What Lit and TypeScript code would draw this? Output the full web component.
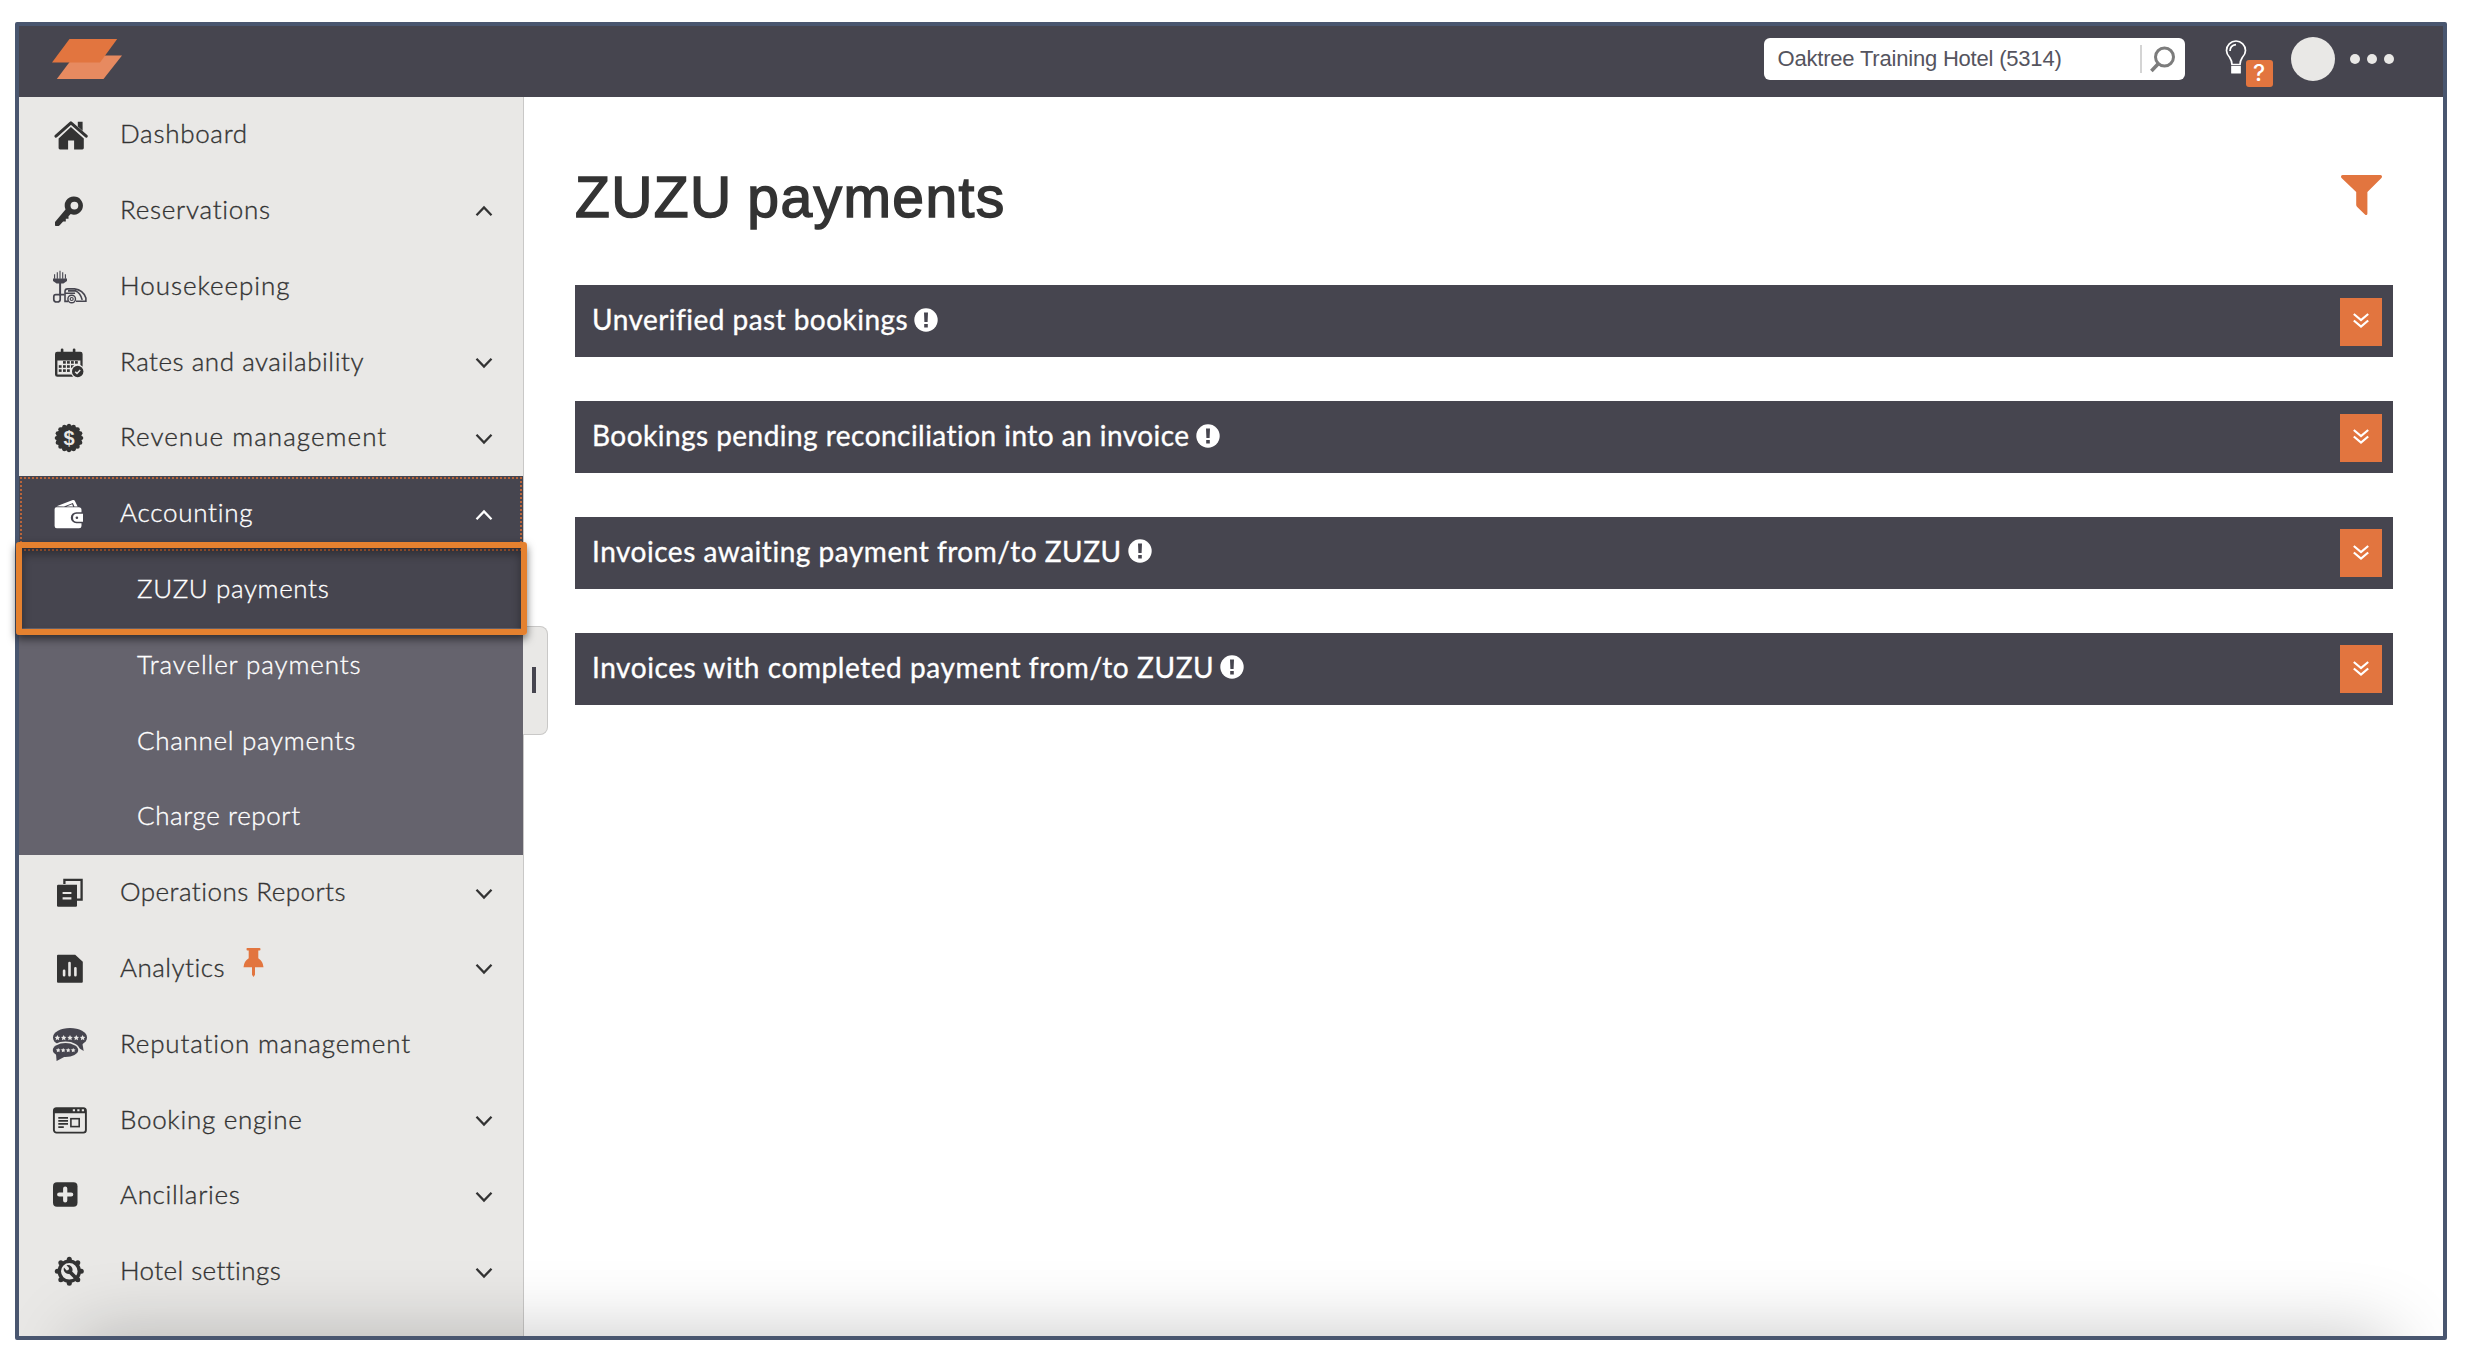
import { LitElement, css, html, svg, nothing } from "lit";
import { customElement, property } from "lit/decorators.js";
import { classMap } from "lit/directives/class-map.js";
import { styleMap } from "lit/directives/style-map.js";

type NavItem = {
  label: string;
  icon?: string;
  tracking: number;
  arrow?: "up" | "down";
  pinned?: boolean;
  active?: boolean;
  children?: NavItem[];
};

const NAV: NavItem[] = [
  { label: "Dashboard", icon: "home", tracking: 0.7 },
  { label: "Reservations", icon: "key", tracking: 0.73, arrow: "up" },
  { label: "Housekeeping", icon: "vacuum", tracking: 0.97 },
  { label: "Rates and availability", icon: "calendar", tracking: 0.53, arrow: "down" },
  { label: "Revenue management", icon: "dollar", tracking: 1.05, arrow: "down" },
  {
    label: "Accounting",
    icon: "wallet",
    tracking: 0.74,
    arrow: "up",
    active: true,
    children: [
      { label: "ZUZU payments", tracking: 0.62, active: true },
      { label: "Traveller payments", tracking: 0.88 },
      { label: "Channel payments", tracking: 0.7 },
      { label: "Charge report", tracking: 0.6 },
    ],
  },
  { label: "Operations Reports", icon: "copy", tracking: 0.46, arrow: "down" },
  { label: "Analytics", icon: "chart", tracking: 0.5, arrow: "down", pinned: true },
  { label: "Reputation management", icon: "reviews", tracking: 0.82 },
  { label: "Booking engine", icon: "browser", tracking: 0.7, arrow: "down" },
  { label: "Ancillaries", icon: "plus", tracking: 0.68, arrow: "down" },
  { label: "Hotel settings", icon: "gear", tracking: 0.4, arrow: "down" },
];

const PANELS = [
  { title: "Unverified past bookings", tracking: 0.46 },
  { title: "Bookings pending reconciliation into an invoice", tracking: 0.46 },
  { title: "Invoices awaiting payment from/to ZUZU", tracking: 0.52 },
  { title: "Invoices with completed payment from/to ZUZU", tracking: 0.57 },
];

const BG = "#e9e8e6";

const star = (x: number, y: number, r: number) => {
  const points = Array.from({ length: 10 }, (_, i) => {
    const radius = i % 2 ? r * 0.5 : r;
    const angle = (i * Math.PI) / 5 - Math.PI / 2;
    return `${x + radius * Math.cos(angle)},${y + radius * Math.sin(angle)}`;
  });
  return svg`<polygon points=${points.join(" ")} fill=${BG} />`;
};

const ring = (count: number, distance: number, r: number, cx: number, cy: number) =>
  Array.from({ length: count }, (_, i) => {
    const angle = (i * 2 * Math.PI) / count;
    return svg`<circle cx=${cx + distance * Math.cos(angle)} cy=${cy + distance * Math.sin(angle)} r=${r} />`;
  });

const ICONS: Record<string, unknown> = {
  home: svg`
    <path d="M25.8 4.8h4.8v9l-4.8-4.4z" />
    <path d="M4 19.2 18.9 5.8 34.2 19.2" fill="none" stroke="currentColor" stroke-width="3" stroke-linecap="round" stroke-linejoin="round" />
    <path d="M18.9 10 31.8 21.4V31q0 1.4-1.4 1.4h-8.3v-8.8h-6v8.8H8q-1.4 0-1.4-1.4v-9.6z" />`,
  key: svg`
    <path fill-rule="evenodd" d="M22 3.6a9 9 0 1 1-3.3 17.4l-2.2 2.2v2.6h-2.7v2.6h-2.7l-3.4 3.8q-1 .9-2.4.9H4.2Q3 33.1 3 31.900v-3l10.500-12.500A9 9 0 0 1 22 3.600zM22.400 8.700a3.900 3.900 0 1 0 0 7.800 3.900 3.900 0 0 0 0-7.800z" />`,
  vacuum: svg`
    <g fill="#46454f">
      <path d="M1 9.600h14v2.400l-3.600 2.600h-6.800L1 12z" />
      <rect x="7.100" y="14" width="2" height="12.500" />
    </g>
    <g fill="none" stroke="#46454f">
      <path d="M2.600 9.800V5.200M5.300 9.800V3.200M8 9.800V1.800M10.700 9.800V3.200M13.400 9.800V5.200" stroke-width="1.100" />
      <path d="M12.500 25.600H3.800q-2 0-2 2.200v2.600q0 2.600 3.200 2.600t3.200-2.600V25" stroke-width="1.700" />
      <path d="M16 32.400h-3V22.500q0-2.600 2.600-2.600h7q8.400 1 11.300 9v3.400H24M16 21.900h7.600q4.600 1.400 6.600 9M13.500 24.200h9.600" stroke-width="1.600" />
      <circle cx="19.700" cy="30" r="3.800" stroke-width="1.400" />
      <circle cx="19.700" cy="30" r="1.500" stroke-width="1.200" />
    </g>`,
  calendar: svg`
    <path d="M3 9q0-2.200 2.200-2.200h3.600V4.400q0-1 1.300-1t1.300 1v2.400h9.400V4.400q0-1 1.300-1t1.300 1v2.400h5q2.200 0 2.200 2.200v20.400q0 2.400-2.400 2.400H5.400Q3 31.800 3 29.400z" />
    <path d="M5.400 15.500h23v14h-23z" fill=${BG} />
    ${[
      [12.4, 17.4], [16.4, 17.4], [20.4, 17.4], [24.4, 17.4],
      [8.2, 21.5], [12.4, 21.5], [16.4, 21.5], [20.4, 21.5],
      [8.2, 25.6], [12.4, 25.6], [16.4, 25.6],
    ].map(([x, y]) => svg`<rect x=${x - 1.4} y=${y - 1.3} width="2.800" height="2.600" />`)}
    <circle cx="25.700" cy="26.500" r="6.900" fill=${BG} />
    <circle cx="25.700" cy="26.500" r="5.700" />
    <path d="m23.200 26.700 1.800 1.700 3.200-3.400" fill="none" stroke=${BG} stroke-width="1.500" />`,
  dollar: svg`
    <circle cx="17" cy="18" r="12.800" />
    ${ring(16, 12.2, 2.1, 17, 18)}
    <text class="glyph" x="17" y="24.900" fill=${BG} text-anchor="middle">$</text>`,
  wallet: svg`
    <path d="M2.600 13.200q0-1.700 1.800-1.900h22.400q2.700 0 2.700 2.600v2.300h-5.200a5.500 5.500 0 0 0 0 11h5.200v2.700q0 2.400-2.400 2.400H4.800q-2.200 0-2.200-2.200z" />
    <path d="M25 17.700h6v8h-6a4 4 0 0 1 0-8z" />
    <circle cx="24.900" cy="21.700" r="1.300" fill="#46454f" />
    <path d="M4.600 10.200 20.800 4q1.400-.4 2 .8l2.800 5.600h-3.200L20.900 7 12 10.400z" />
    <path d="m14.500 10.400 5.600-2.100 1 2.100z" />`,
  copy: svg`
    <path d="M12.400 9V4.900h17.200v19.800H25" fill="none" stroke="currentColor" stroke-width="2.300" />
    <path d="M6.200 9.800H25v20.800q0 1.200-1.200 1.200H6.200Q5 31.800 5 30.600V11q0-1.200 1.200-1.200z" />
    <path d="M10.600 18h8.800M10.600 23.400h8.800" stroke=${BG} stroke-width="2.200" />`,
  chart: svg`
    <path d="M6 3.800h17.200l7.600 7v20q0 1-1 1H6q-1 0-1-1v-26q0-1 1-1z" />
    <path d="M12.100 24.200v-4.400M17.500 24.200V12M23.400 24.200v-7" stroke=${BG} stroke-width="2.600" stroke-linecap="round" />`,
  reviews: svg`
    <g fill="#46454f">
      <ellipse cx="18" cy="10.600" rx="17" ry="9.600" />
      <path d="m22 18 9.700 6-1.400-8z" />
      <ellipse cx="13.500" cy="23" rx="14.200" ry="8.400" fill=${BG} />
      <ellipse cx="13.500" cy="23.100" rx="12.700" ry="7" />
      <path d="m4 27 .6 7L14 29z" />
    </g>
    ${[5.4, 11.7, 18, 24.3, 30.6].map((x) => star(x, 10.9, 2.9))}
    ${[6.2, 11.2, 16.2, 21.2].map((x) => star(x, 23.3, 2.4))}`,
  browser: svg`
    <rect x="1.900" y="5.200" width="32" height="24.400" rx="2.600" fill="none" stroke="currentColor" stroke-width="1.900" />
    <path d="M1.900 5.600h32v4.700h-32z" />
    <path d="M20.800 7.200h2.200M25.300 7.200h2.200M29.800 7.200h2.200" stroke=${BG} stroke-width="2" />
    <path d="M6.300 14.900H16M6.300 17.900H16M6.300 20.900H16M6.300 24.100h5.500" stroke="currentColor" stroke-width="1.700" />
    <rect x="18.900" y="15.700" width="8.300" height="7.900" fill="none" stroke="currentColor" stroke-width="1.600" />`,
  plus: svg`
    <rect x="1" y="4.200" width="24.500" height="24.600" rx="4" />
    <path d="M7.200 16.500h12M13.200 10.500v12" stroke=${BG} stroke-width="4.200" stroke-linecap="round" />`,
  gear: svg`
    <circle cx="17.300" cy="17.300" r="10" fill="none" stroke="currentColor" stroke-width="3.400" />
    ${ring(8, 12, 2.5, 17.3, 17.3)}
    <path d="m17 17 7 7" stroke="currentColor" stroke-width="3.800" />
    <path d="M12 13.600a4.700 4.700 0 0 0 6 6l2.300-2.300a4.700 4.700 0 0 0-5.800-6l2.600 2.700-.6 2-1.900.5z" />`,
};

@customElement("nav-row")
class NavRow extends LitElement {
  @property({ attribute: false }) item!: NavItem;
  @property({ type: Boolean }) sub = false;

  static styles = css`
    :host {
      display: block;
      flex: none;
    }

    .row {
      position: relative;
      box-sizing: border-box;
      height: 75.8px;
      display: flex;
      align-items: center;
      padding: 0 30px 0 33px;
      color: #333;
    }

    .row.active {
      background: #46454f;
      color: #fff;
      outline: 2px dotted #b9643a;
      outline-offset: -3px;
    }

    .row.sub {
      padding-left: 118px;
      background: #65636d;
      color: #fff;
      outline: none;
    }

    .row.sub.active {
      background: #46454f;
    }

    .icon {
      width: 36px;
      height: 36px;
      margin-right: 32px;
      fill: currentColor;
      flex: none;
    }

    .glyph {
      font: bold 20px "Liberation Sans", Arial, sans-serif;
    }

    .label {
      font: 300 26px/32px Lato, "Open Sans", sans-serif;
      -webkit-text-stroke: 0.35px currentColor;
      padding-bottom: 4px;
      white-space: nowrap;
    }

    .pin {
      width: 21px;
      height: 29px;
      margin: 0 0 12px 18px;
      fill: #e2753f;
    }

    .arrow {
      width: 18px;
      height: 12px;
      margin: 1px 0 0 auto;
      fill: none;
      stroke: currentColor;
      stroke-width: 2.3;
    }

    .marker {
      position: absolute;
      z-index: 3;
      left: -3px;
      right: -4px;
      top: -10px;
      bottom: -7px;
      border: 6px solid #e5812f;
      border-radius: 3px;
      box-shadow: 0 4px 9px rgba(0, 0, 0, 0.55), inset 0 6px 10px rgba(0, 0, 0, 0.35);
    }
  `;

  render() {
    const { label, icon, tracking, arrow, pinned, active } = this.item;
    return html`
      <div class=${classMap({ row: true, sub: this.sub, active: !!active })}>
        ${icon ? html`<svg class="icon" viewBox="0 0 36 36">${ICONS[icon]}</svg>` : nothing}
        <span class="label" style=${styleMap({ letterSpacing: `${tracking}px` })}>${label}</span>
        ${pinned
          ? html`<svg class="pin" viewBox="0 0 20 29">
              <path d="M4 0h12q1 0 1 1.200T16 2.600h-1.200v7.600q4.800 3 5.200 9h-8.500v7.600L10 29l-1.500-2.200v-7.600H0q.4-6 5.200-9V2.600H4q-1 0-1-1.400T4 0z" />
            </svg>`
          : nothing}
        ${arrow
          ? html`<svg class="arrow" viewBox="0 0 18 12">
              <path d=${arrow === "up" ? "M1.5 10.2 9 2.5l7.5 7.7" : "M1.5 1.8 9 9.5l7.5-7.7"} />
            </svg>`
          : nothing}
        ${this.sub && active ? html`<div class="marker"></div>` : nothing}
      </div>
    `;
  }
}

@customElement("app-root")
class AppRoot extends LitElement {
  static styles = css`
    :host {
      display: flex;
      box-sizing: border-box;
      height: 1366px;
      padding: 22px 21px 26px 15px;
      background: #fff;
      font-family: "Liberation Sans", Arial, sans-serif;
    }

    .frame {
      position: relative;
      flex: 1;
      display: flex;
      flex-direction: column;
      border: 4px solid #49566f;
      border-radius: 2px;
    }

    .topbar {
      flex: none;
      height: 71.3px;
      display: flex;
      align-items: center;
      background: #46454f;
      padding: 0 49px 0 33px;
      box-sizing: border-box;
    }

    .logo {
      width: 70px;
      height: 40px;
      margin-top: -6px;
    }

    .search {
      box-sizing: border-box;
      width: 421px;
      height: 42px;
      margin: -6px 0 0 auto;
      padding: 0 9px 0 14px;
      display: flex;
      align-items: center;
      background: #fff;
      border-radius: 6px;
      color: #55545e;
      font-size: 22px;
      letter-spacing: -0.2px;
    }

    .search-icon {
      margin-left: auto;
      width: 36px;
      height: 30px;
      fill: none;
      stroke: #7c7c7c;
    }

    .help {
      position: relative;
      width: 48px;
      height: 50px;
      margin: -1px 0 0 40px;
    }

    .bulb {
      width: 22px;
      height: 34px;
      margin-top: 4px;
    }

    .badge {
      position: absolute;
      left: 21px;
      top: 24px;
      width: 27px;
      height: 27px;
      border-radius: 3px;
      background: #e2753f;
      color: #fff;
      font: 500 23px/27px Inter, sans-serif;
      text-align: center;
    }

    .avatar {
      width: 44px;
      height: 44px;
      margin: -5px 0 0 18px;
      border-radius: 50%;
      background: #e9e8e6;
    }

    .dots {
      display: flex;
      gap: 6.4px;
      margin: -5px 0 0 15.5px;
    }

    .dot {
      width: 10.4px;
      height: 10.4px;
      border-radius: 50%;
      background: #e9e8e6;
    }

    .body {
      flex: 1;
      min-height: 0;
      display: flex;
    }

    .sidebar {
      position: relative;
      flex: none;
      width: 504px;
      display: flex;
      flex-direction: column;
      background: #e9e8e6;
      border-right: 1px solid #c9c8c7;
    }

    .handle {
      position: absolute;
      z-index: 1;
      left: 504px;
      top: 529px;
      width: 25px;
      height: 109px;
      box-sizing: border-box;
      display: flex;
      align-items: center;
      padding-left: 9px;
      border: 1px solid #c9c8c7;
      border-left: none;
      border-radius: 0 8px 8px 0;
      background: #e9e8e6;
    }

    .handle-bar {
      width: 4px;
      height: 26px;
      margin-bottom: 2px;
      background: #46454f;
    }

    .main {
      flex: 1;
      padding: 0 50px 0 51px;
    }

    .heading {
      height: 187.7px;
      display: flex;
      justify-content: space-between;
      box-sizing: border-box;
      padding: 64px 11px 0 0;
    }

    .title {
      margin: 0;
      font: 400 57px/72px "Liberation Sans", Arial, sans-serif;
      letter-spacing: 1.4px;
      word-spacing: -2.5px;
      color: #333;
      -webkit-text-stroke: 1.5px #333;
    }

    .filter {
      width: 41px;
      height: 40px;
      margin-top: 13.5px;
      fill: #e2753f;
    }

    .panel {
      box-sizing: border-box;
      height: 72.4px;
      margin-bottom: 43.5px;
      padding: 0 11px 0 17px;
      display: flex;
      align-items: center;
      background: #46454f;
      color: #fff;
    }

    .panel-title {
      font: 400 28px/36px Lato, "Open Sans", sans-serif;
      -webkit-text-stroke: 0.35px #fff;
      padding-bottom: 4px;
      white-space: nowrap;
    }

    .alert {
      width: 24px;
      height: 24px;
      margin: 0 0 3px 6px;
    }

    .expand {
      width: 42px;
      height: 48px;
      margin: 1px 0 0 auto;
      display: flex;
      align-items: center;
      justify-content: center;
      background: #e2753f;
    }

    .expand-icon {
      width: 16px;
      height: 15px;
      margin-top: -2px;
      fill: none;
      stroke: #fff;
      stroke-width: 2.2;
    }

    .fade {
      position: absolute;
      inset: 0;
      overflow: hidden;
      pointer-events: none;
    }

    .fade-shape {
      position: absolute;
      left: 58px;
      right: 52px;
      top: 100%;
      height: 200px;
      box-shadow: 0 0 75px rgba(0, 0, 0, 0.23);
    }
  `;

  renderTopbar() {
    return html`
      <header class="topbar">
        <svg class="logo" viewBox="0 0 70 40">
          <path d="M22.500 16.500H70L51.500 40H4.800z" fill="#e78a60" />
          <path d="M17.500 0h47.700L48 23.500H0z" fill="#e2753f" />
        </svg>
        <div class="search">
          <span>Oaktree Training Hotel (5314)</span>
          <svg class="search-icon" viewBox="0 0 36 30">
            <path d="M1 1v28" stroke="#c6c6c6" stroke-width="1.500" />
            <circle cx="24.500" cy="13" r="9" stroke-width="3" />
            <path d="m18 20-6.600 7" stroke-width="3.600" />
          </svg>
        </div>
        <div class="help">
          <svg class="bulb" viewBox="0 0 22 34" fill="none" stroke="#fff" stroke-width="1.700">
            <path d="M7 24.500q0-3.500-2.300-7Q1.500 14 1.500 10.500a9.500 9.500 0 0 1 19 0q0 3.500-3.200 7Q15 21 15 24.500z" />
            <path d="M5 11q0-5.600 6-6.400" />
            <rect x="6.700" y="26.500" width="8.600" height="6.500" fill="#fff" stroke-width="1" />
          </svg>
          <span class="badge">?</span>
        </div>
        <div class="avatar"></div>
        <div class="dots"><i class="dot"></i><i class="dot"></i><i class="dot"></i></div>
      </header>
    `;
  }

  renderPanel(panel: { title: string; tracking: number }) {
    return html`
      <section class="panel">
        <span class="panel-title" style=${styleMap({ letterSpacing: `${panel.tracking}px` })}>${panel.title}</span>
        <svg class="alert" viewBox="0 0 24 24">
          <circle cx="12" cy="12" r="11.700" fill="#fff" />
          <path d="M10 4.500h4l-.4 9.500h-3.200zM10.200 16h3.600v3.400h-3.600z" fill="#46454f" />
        </svg>
        <div class="expand">
          <svg class="expand-icon" viewBox="0 0 16 15">
            <path d="m.8 1 7.200 6 7.200-6M.8 7.500l7.200 6 7.200-6" />
          </svg>
        </div>
      </section>
    `;
  }

  render() {
    return html`
      <div class="frame">
        ${this.renderTopbar()}
        <div class="body">
          <nav class="sidebar">
            ${NAV.map(
              (item) => html`
                <nav-row .item=${item}></nav-row>
                ${item.children?.map((child) => html`<nav-row .item=${child} sub></nav-row>`)}
              `
            )}
            <div class="handle"><div class="handle-bar"></div></div>
          </nav>
          <main class="main">
            <div class="heading">
              <h1 class="title">ZUZU payments</h1>
              <svg class="filter" viewBox="0 0 41 40">
                <path d="M1.500 0h38Q41 0 41 1.500q0 1-.8 1.800L26.400 17v21.500q0 2.200-2.200 1.200l-8-7.700q-1-1-1-2.300V17L.8 3.300Q0 2.500 0 1.500 0 0 1.500 0z" />
              </svg>
            </div>
            ${PANELS.map((panel) => this.renderPanel(panel))}
          </main>
        </div>
        <div class="fade"><div class="fade-shape"></div></div>
      </div>
    `;
  }
}
